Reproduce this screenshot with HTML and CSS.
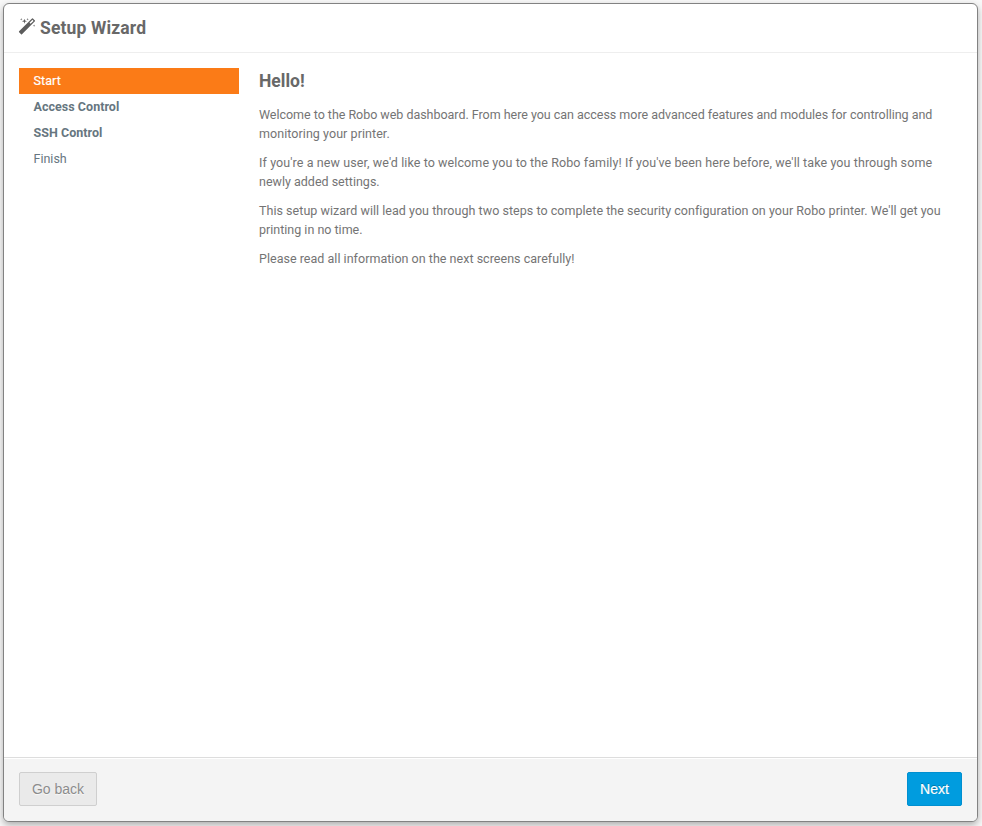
FILE: index.html
```html
<!DOCTYPE html>
<html lang="en">
<head>
<meta charset="utf-8">
<title>Setup Wizard</title>
<link rel="stylesheet" href="styles.css">
</head>
<body>
<main class="modal">
  <header class="modal-header">
    <svg class="icon" viewBox="0 0 1792 1792" aria-hidden="true"><path d="M1254 581l293-293-107-107-293 293zm447-293q0 27-18 45l-1286 1286q-18 18-45 18t-45-18l-198-198q-18-18-18-45t18-45l1286-1286q18-18 45-18t45 18l198 198q18 18 18 45zm-1351-190l98 30-98 30-30 98-30-98-98-30 98-30 30-98zm350 162l196 60-196 60-60 196-60-196-196-60 196-60 60-196zm930 478l98 30-98 30-30 98-30-98-98-30 98-30 30-98zm-640-640l98 30-98 30-30 98-30-98-98-30 98-30 30-98z"/></svg>
    <h1><span class="title">Setup Wizard</span></h1>
  </header>
  <div class="modal-body">
    <nav class="steps">
      <a class="step active"><span>Start</span></a>
      <a class="step required"><span>Access Control</span></a>
      <a class="step required"><span>SSH Control</span></a>
      <a class="step"><span>Finish</span></a>
    </nav>
    <section class="content">
      <h2>Hello!</h2>
      <p><span class="l1">Welcome to the Robo web dashboard. From here you can access more advanced features and modules for controlling and</span><br><span class="l2">monitoring your printer.</span></p>
      <p><span class="l3">If you're a new user, we'd like to welcome you to the Robo family! If you've been here before, we'll take you through some</span><br><span>newly added settings.</span></p>
      <p><span class="l5">This setup wizard will lead you through two steps to complete the security configuration on your Robo printer. We'll get you</span><br><span>printing in no time.</span></p>
      <p><span class="l7">Please read all information on the next screens carefully!</span></p>
    </section>
  </div>
  <footer class="modal-footer">
    <button class="btn" disabled>Go back</button>
    <button class="btn primary">Next</button>
  </footer>
</main>
</body>
</html>
```
FILE: styles.css
```css
* { box-sizing: border-box; }
body {
  margin: 0;
  height: 826px;
  overflow: hidden;
  padding: 3px 4px 4px 3px;
  background: #f8f8f8;
  color: #686868;
  font: 12.5px/19px Roboto, "Liberation Sans", sans-serif;
}
.modal {
  display: flex;
  flex-direction: column;
  height: 819px;
  border: 1px solid #828282;
  border-radius: 6px;
  background: #fff;
  box-shadow: 0 3px 7px rgba(0, 0, 0, .3);
  overflow: hidden;
}
.modal-header {
  display: flex;
  align-items: center;
  height: 49px;
  padding: 0 14px;
  border-bottom: 1px solid #eee;
}
.icon { width: 18px; height: 18px; fill: #5c5c5c; margin: 0 4px 2px 0; }
h1, h2 { margin: 0; font-size: 17.5px; line-height: 24px; font-weight: 700; }
.title { letter-spacing: .14px; }
.modal-body { display: flex; flex: 1; padding: 15px; gap: 20px; }
.steps { width: 220px; }
.step { display: block; height: 26px; padding: 0 14px 0 14.5px; line-height: 26px; color: #667680; }
.step.active { background: #fb7b17; color: #fff; -webkit-text-stroke: .2px #fff; letter-spacing: .1px; }
.step.required { font-weight: 700; letter-spacing: .03px; }
.content { flex: 1; white-space: nowrap; }
.content h2 { margin: 1px 0 12px; }
.content p { margin: 0 0 10px; color: #747474; }
.l1 { letter-spacing: -.027px; }
.l2 { letter-spacing: .06px; }
.l3 { letter-spacing: .095px; }
.l5 { letter-spacing: .037px; }
.l7 { letter-spacing: .025px; }
.modal-footer {
  display: flex;
  justify-content: space-between;
  height: 64px;
  padding: 14px 15px;
  border-top: 1px solid #ddd;
  box-shadow: inset 0 1px #fff;
  background: #f4f4f4;
}
.btn {
  width: 78px;
  height: 34px;
  padding: 0;
  border: 1px solid #cfcfcf;
  border-radius: 2px;
  background: #eaeaea;
  color: #8c8c8c;
  font: 14px/20px "Liberation Sans", sans-serif;
  text-shadow: 0 1px 1px rgba(255, 255, 255, .75);
  white-space: nowrap;
}
.btn.primary {
  width: 55px;
  border-color: #008fd0;
  background: #009cdf;
  color: #fff;
  text-shadow: 0 -1px rgba(0, 0, 0, .25);
  -webkit-text-stroke: .2px #fff;
}
```
